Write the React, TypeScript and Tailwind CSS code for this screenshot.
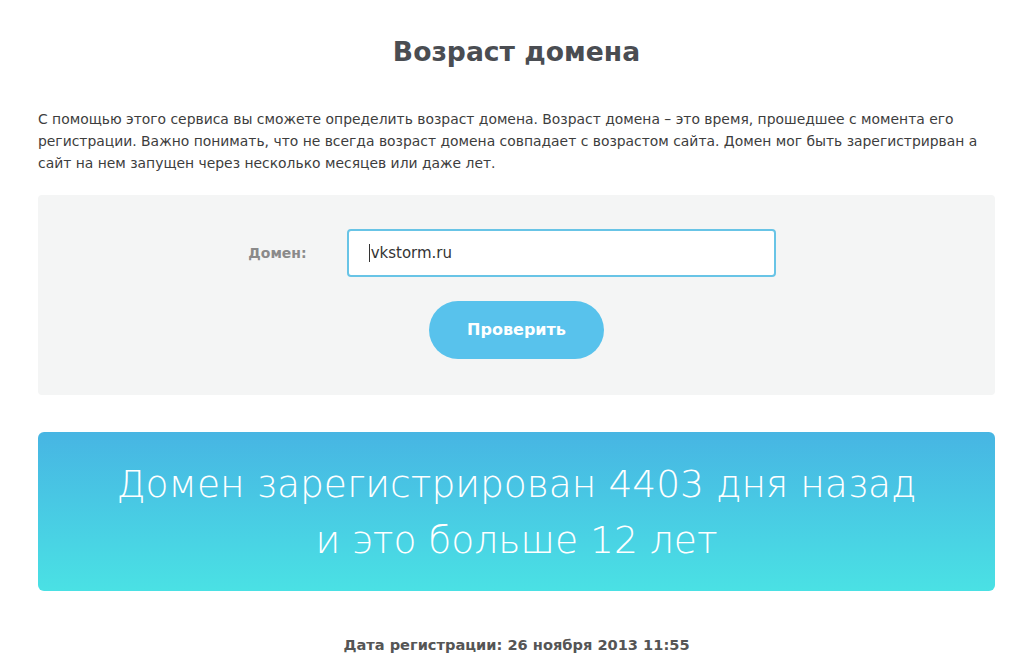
export default function App() {
  return (
    <div
      className="min-h-screen bg-white text-[#3a3a3a]"
      style={{ fontFamily: '"DejaVu Sans", "Open Sans", sans-serif' }}
    >
      <div className="ml-[38px] w-[957px] pt-[34px] pb-[20px]">
        {/* Title */}
        <h1 className="text-center text-[26.6px] font-bold leading-[36px] text-[#4a4d52]">
          Возраст домена
        </h1>

        {/* Description */}
        <p className="mt-[38px] whitespace-nowrap text-[13.9px] leading-[22px] text-[#3d3d3d]">
          С помощью этого сервиса вы сможете определить возраст домена. Возраст домена – это время, прошедшее с момента его
          <br />
          регистрации. Важно понимать, что не всегда возраст домена совпадает с возрастом сайта. Домен мог быть зарегистрирван а
          <br />
          сайт на нем запущен через несколько месяцев или даже лет.
        </p>

        {/* Form panel */}
        <div className="mt-[21px] flex h-[200px] flex-col items-center rounded-[4px] bg-[#f4f5f5] pt-[34px]">
          <div className="flex items-center">
            <label className="mr-[40px] text-[14px] font-semibold text-[#8a8a8a]">
              Домен:
            </label>
            <div className="mr-[9px] flex h-[48px] w-[429px] items-center rounded-[4px] border-2 border-[#68c4e6] bg-white px-[20px] text-[15px] text-[#333]">
              <span className="mr-[1px] inline-block h-[18px] w-px bg-[#333]" />
              vkstorm.ru
            </div>
          </div>
          <button className="mt-[24px] h-[58px] w-[175px] rounded-full bg-[#58c2ec] text-[16px] font-bold text-white">
            Проверить
          </button>
        </div>

        {/* Result banner */}
        <div className="mt-[37px] flex h-[159px] flex-col items-center justify-center rounded-[6px] bg-gradient-to-b from-[#47b5e3] to-[#4ae1e4] text-center text-[37.6px] font-light leading-[56px] text-white">
          <div>Домен зарегистрирован 4403 дня назад</div>
          <div>и это больше 12 лет</div>
        </div>

        {/* Registration date */}
        <div className="mt-[43px] text-center text-[14.6px] font-bold text-[#555]">
          Дата регистрации: 26 ноября 2013 11:55
        </div>
      </div>
    </div>
  );
}
